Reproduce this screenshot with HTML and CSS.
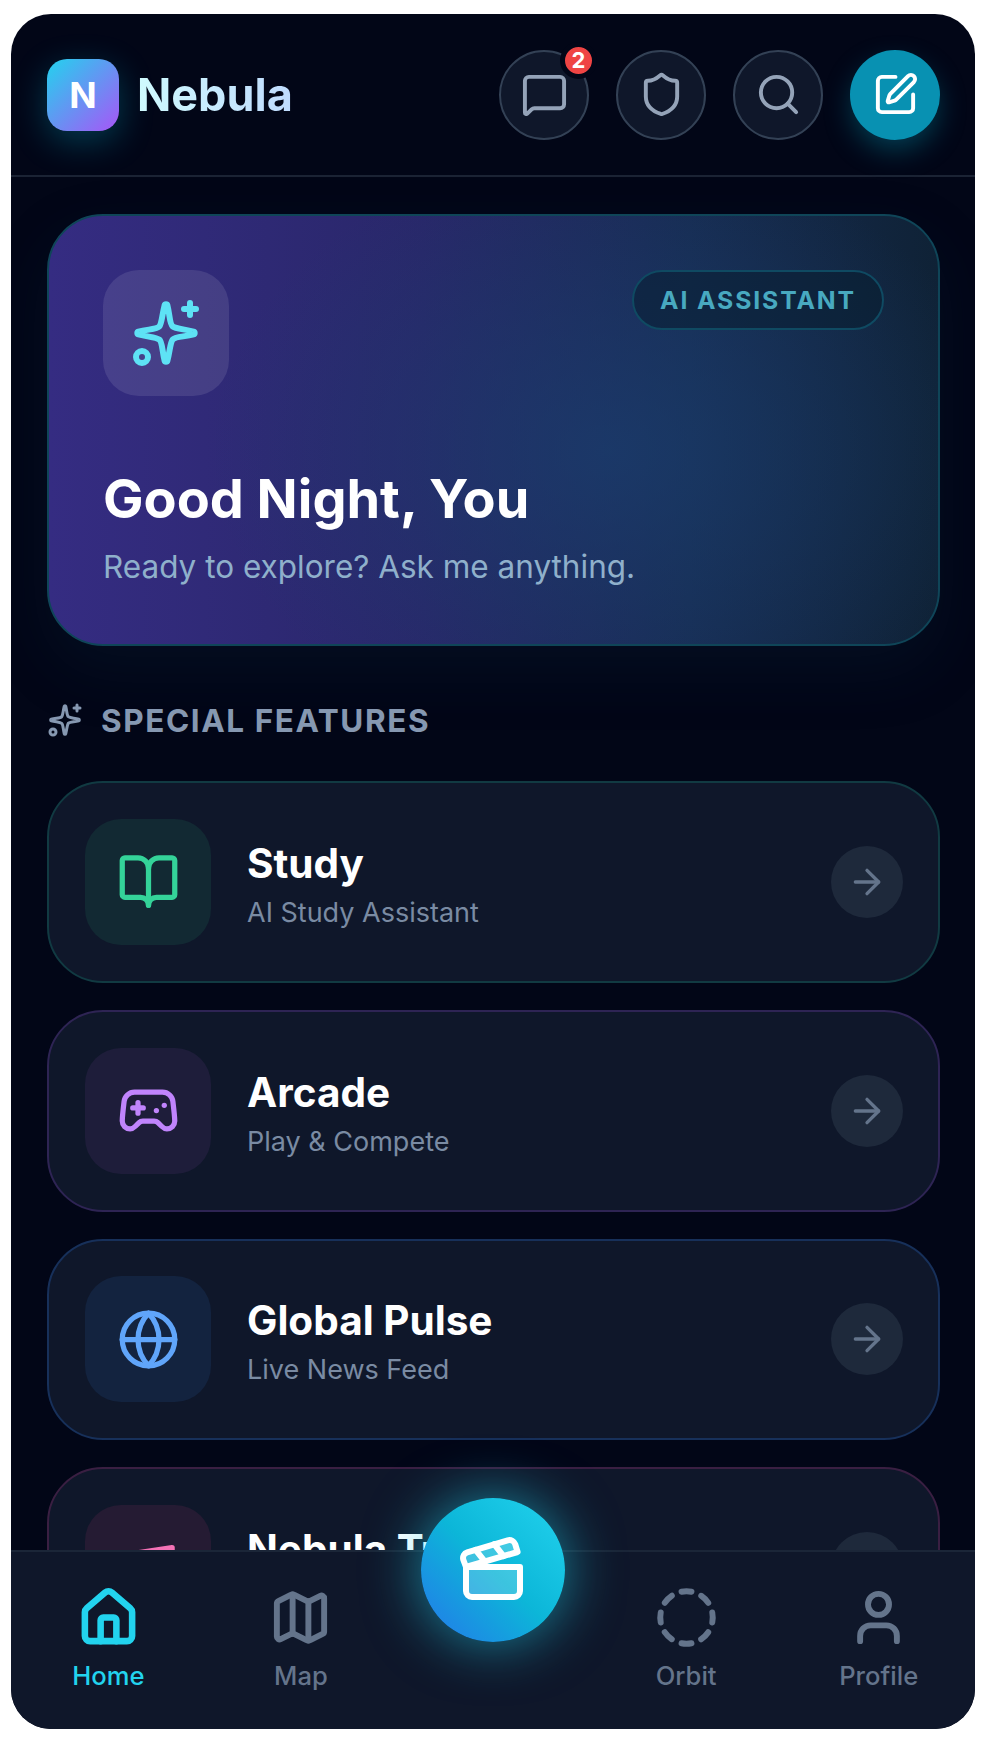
FILE: index.html
```html
<!DOCTYPE html>
<html>
<head>
    <title>Nebula</title>
    <link rel="stylesheet" href="styles.css">
</head>
<body>
    <div class="app">
        <header class="topbar">
            <div class="brand">
                <div class="logo">N</div>
                <span class="brand-name">Nebula</span>
            </div>
            <div class="actions">
                <button class="round-btn">
                    <svg class="icon" viewBox="0 0 24 24"><path d="M22 17a2 2 0 0 1-2 2H6.828a2 2 0 0 0-1.414.586l-2.202 2.202A.71.71 0 0 1 2 21.286V5a2 2 0 0 1 2-2h16a2 2 0 0 1 2 2z"/></svg>
                    <span class="count">2</span>
                </button>
                <button class="round-btn">
                    <svg class="icon" viewBox="0 0 24 24"><path d="M20 13c0 5-3.5 7.5-7.66 8.95a1 1 0 0 1-.67-.01C7.5 20.5 4 18 4 13V6a1 1 0 0 1 1-1c2 0 4.5-1.2 6.24-2.72a1.17 1.17 0 0 1 1.52 0C14.51 3.81 17 5 19 5a1 1 0 0 1 1 1z"/></svg>
                </button>
                <button class="round-btn">
                    <svg class="icon" viewBox="0 0 24 24"><circle cx="11" cy="11" r="8"/><path d="m21 21-4.3-4.3"/></svg>
                </button>
                <button class="round-btn compose">
                    <svg class="icon" viewBox="0 0 24 24"><path d="M12 3H5a2 2 0 0 0-2 2v14a2 2 0 0 0 2 2h14a2 2 0 0 0 2-2v-7"/><path d="M18.375 2.625a1 1 0 0 1 3 3l-9.013 9.014a2 2 0 0 1-.853.505l-2.873.84a.5.5 0 0 1-.62-.62l.84-2.873a2 2 0 0 1 .506-.852z"/></svg>
                </button>
            </div>
        </header>

        <main class="content">
            <section class="hero">
                <div class="hero-top">
                    <div class="hero-icon">
                        <svg viewBox="0 0 24 24"><path d="M11.52 2.8a.5.5 0 0 1 .96 0C13.3 6 13.2 9 14.2 9.8S18 10.7 21.2 11.52a.5.5 0 0 1 0 .96C18 13.3 15 13.2 14.2 14.2S13.3 18 12.48 21.2a.5.5 0 0 1-.96 0C10.7 18 10.8 15 9.8 14.2S6 13.3 2.8 12.48a.5.5 0 0 1 0-.96C6 10.7 9 10.8 9.8 9.8S10.7 6 11.52 2.8Z"/><path d="M20 2v4"/><path d="M22 4h-4"/><circle cx="4" cy="20" r="2"/></svg>
                    </div>
                    <span class="hero-badge">AI ASSISTANT</span>
                </div>
                <h1>Good Night, You</h1>
                <p>Ready to explore? Ask me anything.</p>
            </section>

            <h2 class="section-title">
                <svg viewBox="0 0 24 24"><path d="M11.52 2.8a.5.5 0 0 1 .96 0C13.3 6 13.2 9 14.2 9.8S18 10.7 21.2 11.52a.5.5 0 0 1 0 .96C18 13.3 15 13.2 14.2 14.2S13.3 18 12.48 21.2a.5.5 0 0 1-.96 0C10.7 18 10.8 15 9.8 14.2S6 13.3 2.8 12.48a.5.5 0 0 1 0-.96C6 10.7 9 10.8 9.8 9.8S10.7 6 11.52 2.8Z"/><path d="M20 2v4"/><path d="M22 4h-4"/><circle cx="4" cy="20" r="2"/></svg>
                SPECIAL FEATURES
            </h2>

            <div class="features">
                <div class="feature green">
                    <div class="feature-icon">
                        <svg viewBox="0 0 24 24"><path d="M12 7v14"/><path d="M3 18a1 1 0 0 1-1-1V4a1 1 0 0 1 1-1h5a4 4 0 0 1 4 4 4 4 0 0 1 4-4h5a1 1 0 0 1 1 1v13a1 1 0 0 1-1 1h-6a3 3 0 0 0-3 3 3 3 0 0 0-3-3z"/></svg>
                    </div>
                    <div class="feature-text">
                        <h3>Study</h3>
                        <p>AI Study Assistant</p>
                    </div>
                    <div class="go">
                        <svg viewBox="0 0 24 24"><path d="M5 12h14"/><path d="m12 5 7 7-7 7"/></svg>
                    </div>
                </div>

                <div class="feature purple">
                    <div class="feature-icon">
                        <svg viewBox="0 0 24 24"><path d="M6 11h4"/><path d="M8 9v4"/><path d="M15 12h.01"/><path d="M18 10h.01"/><path d="M17.32 5H6.68a4 4 0 0 0-3.978 3.59c-.006.052-.01.101-.017.152C2.604 9.416 2 14.456 2 16a3 3 0 0 0 3 3c1 0 1.5-.5 2-1l1.414-1.414A2 2 0 0 1 9.828 16h4.344a2 2 0 0 1 1.414.586L17 18c.5.5 1 1 2 1a3 3 0 0 0 3-3c0-1.545-.604-6.584-.685-7.258-.007-.05-.011-.1-.017-.151A4 4 0 0 0 17.32 5z"/></svg>
                    </div>
                    <div class="feature-text">
                        <h3>Arcade</h3>
                        <p>Play &amp; Compete</p>
                    </div>
                    <div class="go">
                        <svg viewBox="0 0 24 24"><path d="M5 12h14"/><path d="m12 5 7 7-7 7"/></svg>
                    </div>
                </div>

                <div class="feature blue">
                    <div class="feature-icon">
                        <svg viewBox="0 0 24 24"><circle cx="12" cy="12" r="10"/><path d="M12 2a14.5 14.5 0 0 0 0 20 14.5 14.5 0 0 0 0-20"/><path d="M2 12h20"/></svg>
                    </div>
                    <div class="feature-text">
                        <h3>Global Pulse</h3>
                        <p>Live News Feed</p>
                    </div>
                    <div class="go">
                        <svg viewBox="0 0 24 24"><path d="M5 12h14"/><path d="m12 5 7 7-7 7"/></svg>
                    </div>
                </div>

                <div class="feature pink">
                    <div class="feature-icon">
                        <svg viewBox="0 0 24 24"><path d="M21 4 8 6v10l13 2z"/></svg>
                    </div>
                    <div class="feature-text">
                        <h3>Nebula Tube</h3>
                        <p>&nbsp;</p>
                    </div>
                    <div class="go">
                        <svg viewBox="0 0 24 24"><path d="M5 12h14"/><path d="m12 5 7 7-7 7"/></svg>
                    </div>
                </div>
            </div>
        </main>

        <nav class="tabbar">
            <a class="tab active">
                <svg viewBox="0 0 24 24"><path d="M15 21v-8a1 1 0 0 0-1-1h-4a1 1 0 0 0-1 1v8"/><path d="M3 10a2 2 0 0 1 .709-1.528l7-5.999a2 2 0 0 1 2.582 0l7 5.999A2 2 0 0 1 21 10v9a2 2 0 0 1-2 2H5a2 2 0 0 1-2-2z"/></svg>
                <span>Home</span>
            </a>
            <a class="tab">
                <svg viewBox="0 0 24 24"><path d="M14.106 5.553a2 2 0 0 0 1.788 0l3.659-1.83A1 1 0 0 1 21 4.619v12.764a1 1 0 0 1-.553.894l-4.553 2.277a2 2 0 0 1-1.788 0l-4.212-2.106a2 2 0 0 0-1.788 0l-3.659 1.83A1 1 0 0 1 3 19.381V6.618a1 1 0 0 1 .553-.894l4.553-2.277a2 2 0 0 1 1.788 0z"/><path d="M15 5.764v15"/><path d="M9 3.236v15"/></svg>
                <span>Map</span>
            </a>
            <div class="tab-gap"></div>
            <a class="tab">
                <svg viewBox="0 0 24 24"><path d="M10.1 2.182a10 10 0 0 1 3.8 0"/><path d="M13.9 21.818a10 10 0 0 1-3.8 0"/><path d="M17.609 3.721a10 10 0 0 1 2.69 2.7"/><path d="M2.182 13.9a10 10 0 0 1 0-3.8"/><path d="M20.279 17.609a10 10 0 0 1-2.7 2.69"/><path d="M21.818 10.1a10 10 0 0 1 0 3.8"/><path d="M3.721 6.391a10 10 0 0 1 2.7-2.69"/><path d="M6.391 20.279a10 10 0 0 1-2.69-2.7"/></svg>
                <span>Orbit</span>
            </a>
            <a class="tab">
                <svg viewBox="0 0 24 24"><path d="M19 21v-2a4 4 0 0 0-4-4H9a4 4 0 0 0-4 4v2"/><circle cx="12" cy="7" r="4"/></svg>
                <span>Profile</span>
            </a>
            <button class="fab">
                <svg viewBox="0 0 24 24"><path class="fill" d="M20.2 6 3 11l-.9-2.4c-.3-1.1.3-2.2 1.3-2.5l13.5-4c1.1-.3 2.2.3 2.5 1.3Z"/><path d="m6.2 5.3 3.1 3.9"/><path d="m12.4 3.4 3.1 4"/><path class="fill" d="M3 11h18v8a2 2 0 0 1-2 2H5a2 2 0 0 1-2-2Z"/></svg>
            </button>
        </nav>
    </div>
</body>
</html>
```

FILE: styles.css
```css
* {
    box-sizing: border-box;
}
body {
    margin: 0;
    background-color: #fff;
    font-family: "Inter", "Liberation Sans", sans-serif;
}
h1, h2, h3, p {
    margin: 0;
}
svg {
    fill: none;
    stroke: currentColor;
    stroke-width: 2;
    stroke-linecap: round;
    stroke-linejoin: round;
    display: block;
}
button {
    border: none;
    padding: 0;
    font-family: inherit;
    cursor: pointer;
}

.app {
    position: relative;
    display: flex;
    flex-direction: column;
    width: 964px;
    height: 1715px;
    margin: 14px 0 0 11px;
    border-radius: 40px;
    overflow: hidden;
    background-color: #020617;
}

/* top bar */
.topbar {
    flex: none;
    display: flex;
    align-items: center;
    justify-content: space-between;
    height: 163px;
    padding: 0 35px 0 36px;
    border-bottom: 2px solid #1b2334;
}
.brand {
    display: flex;
    align-items: center;
    gap: 18px;
}
.logo {
    display: flex;
    align-items: center;
    justify-content: center;
    width: 72px;
    height: 72px;
    border-radius: 20px;
    background: linear-gradient(135deg, #22d3ee, #a855f7);
    box-shadow: 0 10px 34px rgba(6, 182, 212, 0.3);
    color: #fff;
    font-size: 36px;
    font-weight: 700;
}
.brand-name {
    font-size: 45px;
    font-weight: 700;
    background: linear-gradient(90deg, #cffafe, #bfdbfe);
    -webkit-background-clip: text;
    background-clip: text;
    color: transparent;
}
.actions {
    display: flex;
    gap: 27px;
}
.round-btn {
    position: relative;
    display: flex;
    align-items: center;
    justify-content: center;
    width: 90px;
    height: 90px;
    border: 2px solid #334155;
    border-radius: 50%;
    background-color: #0f172a;
    color: #94a3b8;
}
.round-btn .icon {
    width: 47px;
    height: 47px;
}
.compose {
    border: none;
    background-color: #0891b2;
    color: #fff;
    box-shadow: 0 12px 30px -4px rgba(6, 182, 212, 0.36);
}
.count {
    position: absolute;
    top: -10px;
    right: -10px;
    display: flex;
    align-items: center;
    justify-content: center;
    width: 37px;
    height: 37px;
    border: 5px solid #020617;
    border-radius: 50%;
    background-color: #ef4444;
    color: #fff;
    font-size: 22px;
    font-weight: 700;
}

/* scrolling part */
.content {
    flex: 1;
    min-height: 0;
    overflow: hidden;
    padding: 37px 35px 0 36px;
}
.hero {
    height: 432px;
    padding: 54px 54px 0 54px;
    border: 2px solid #0f4558;
    border-radius: 56px;
    background:
        radial-gradient(ellipse 400px 300px at 63% 55%, rgba(26, 62, 110, 0.7), rgba(26, 62, 110, 0)),
        linear-gradient(90deg, #352c82 0%, #29276a 42%, #172c52 72%, #0f2236 100%);
    box-shadow: 0 24px 60px rgba(15, 40, 70, 0.22);
}
.hero-top {
    display: flex;
    align-items: flex-start;
    justify-content: space-between;
}
.hero-icon {
    display: flex;
    align-items: center;
    justify-content: center;
    width: 126px;
    height: 126px;
    border-radius: 36px;
    background-color: rgba(255, 255, 255, 0.1);
    color: #5ee2f5;
}
.hero-icon svg {
    width: 72px;
    height: 72px;
}
.hero-badge {
    height: 60px;
    padding: 0 26px;
    border: 2px solid #0f4a62;
    border-radius: 30px;
    background-color: rgba(8, 30, 48, 0.55);
    color: #48a9c0;
    font-size: 24.75px;
    font-weight: 700;
    line-height: 56px;
    letter-spacing: 1.9px;
}
.hero h1 {
    margin-top: 69px;
    color: #fff;
    font-size: 54px;
    font-weight: 700;
    line-height: 68px;
}
.hero p {
    margin-top: 12px;
    color: #8fb0cb;
    font-size: 31.5px;
    line-height: 44px;
}

.section-title {
    display: flex;
    align-items: center;
    gap: 18px;
    height: 38px;
    margin: 55px 0 42px;
    color: #8698b1;
    font-size: 31.5px;
    font-weight: 700;
    letter-spacing: 0.05em;
}
.section-title svg {
    width: 36px;
    height: 36px;
    flex: none;
}

/* feature cards */
.features {
    display: flex;
    flex-direction: column;
    gap: 27px;
}
.feature {
    display: flex;
    flex: none;
    align-items: center;
    gap: 36px;
    height: 201.8px;
    padding: 0 35px 0 36px;
    border: 2px solid;
    border-radius: 56px;
    background-color: #0f172a;
}
.feature-icon {
    display: flex;
    flex: none;
    align-items: center;
    justify-content: center;
    width: 126px;
    height: 126px;
    border-radius: 36px;
}
.feature-icon svg {
    width: 63px;
    height: 63px;
}
.feature-text {
    flex: 1;
    padding-top: 4px;
}
.feature-text h3 {
    color: #fff;
    font-size: 40.5px;
    font-weight: 700;
    line-height: 54px;
}
.feature-text p {
    margin-top: 4px;
    color: #7a8ba3;
    font-size: 27px;
    line-height: 36px;
}
.go {
    display: flex;
    flex: none;
    align-items: center;
    justify-content: center;
    width: 72px;
    height: 72px;
    border-radius: 50%;
    background-color: #1e293b;
    color: #64748b;
}
.go svg {
    width: 40px;
    height: 40px;
}
.green {
    border-color: #113a42;
}
.green .feature-icon {
    background-color: #122933;
    color: #34d399;
}
.purple {
    border-color: #2e2454;
}
.purple .feature-icon {
    background-color: #1e1d3a;
    color: #c084fc;
}
.blue {
    border-color: #17305a;
}
.blue .feature-icon {
    background-color: #13233f;
    color: #60a5fa;
}
.pink {
    border-color: #3a1f42;
}
.pink .feature-icon {
    background-color: #251b33;
    color: #f472b6;
}

/* bottom nav */
.tabbar {
    position: relative;
    flex: none;
    display: grid;
    grid-template-columns: repeat(5, 1fr);
    height: 179px;
    padding: 34px 0 0 1px;
    border-top: 2px solid #1b2638;
    background-color: #0f172a;
}
.tab {
    display: flex;
    flex-direction: column;
    align-items: center;
    gap: 11px;
    color: #64748b;
    font-size: 25.6px;
    font-weight: 500;
}
.tab svg {
    width: 63px;
    height: 63px;
    stroke-width: 2.25;
}
.tab.active {
    color: #22d3ee;
}
.tab.active svg {
    stroke-width: 2.5;
}
.fab {
    position: absolute;
    top: -54px;
    left: 410px;
    display: flex;
    align-items: center;
    justify-content: center;
    width: 144px;
    height: 144px;
    border-radius: 50%;
    background: linear-gradient(45deg, #2576ea 0%, #0cb6d8 50%, #22d3ee 100%);
    box-shadow: 0 0 56px rgba(34, 211, 238, 0.6);
    color: #fff;
}
.fab svg {
    width: 72px;
    height: 72px;
}
.fab .fill {
    fill: rgba(255, 255, 255, 0.2);
}
```
